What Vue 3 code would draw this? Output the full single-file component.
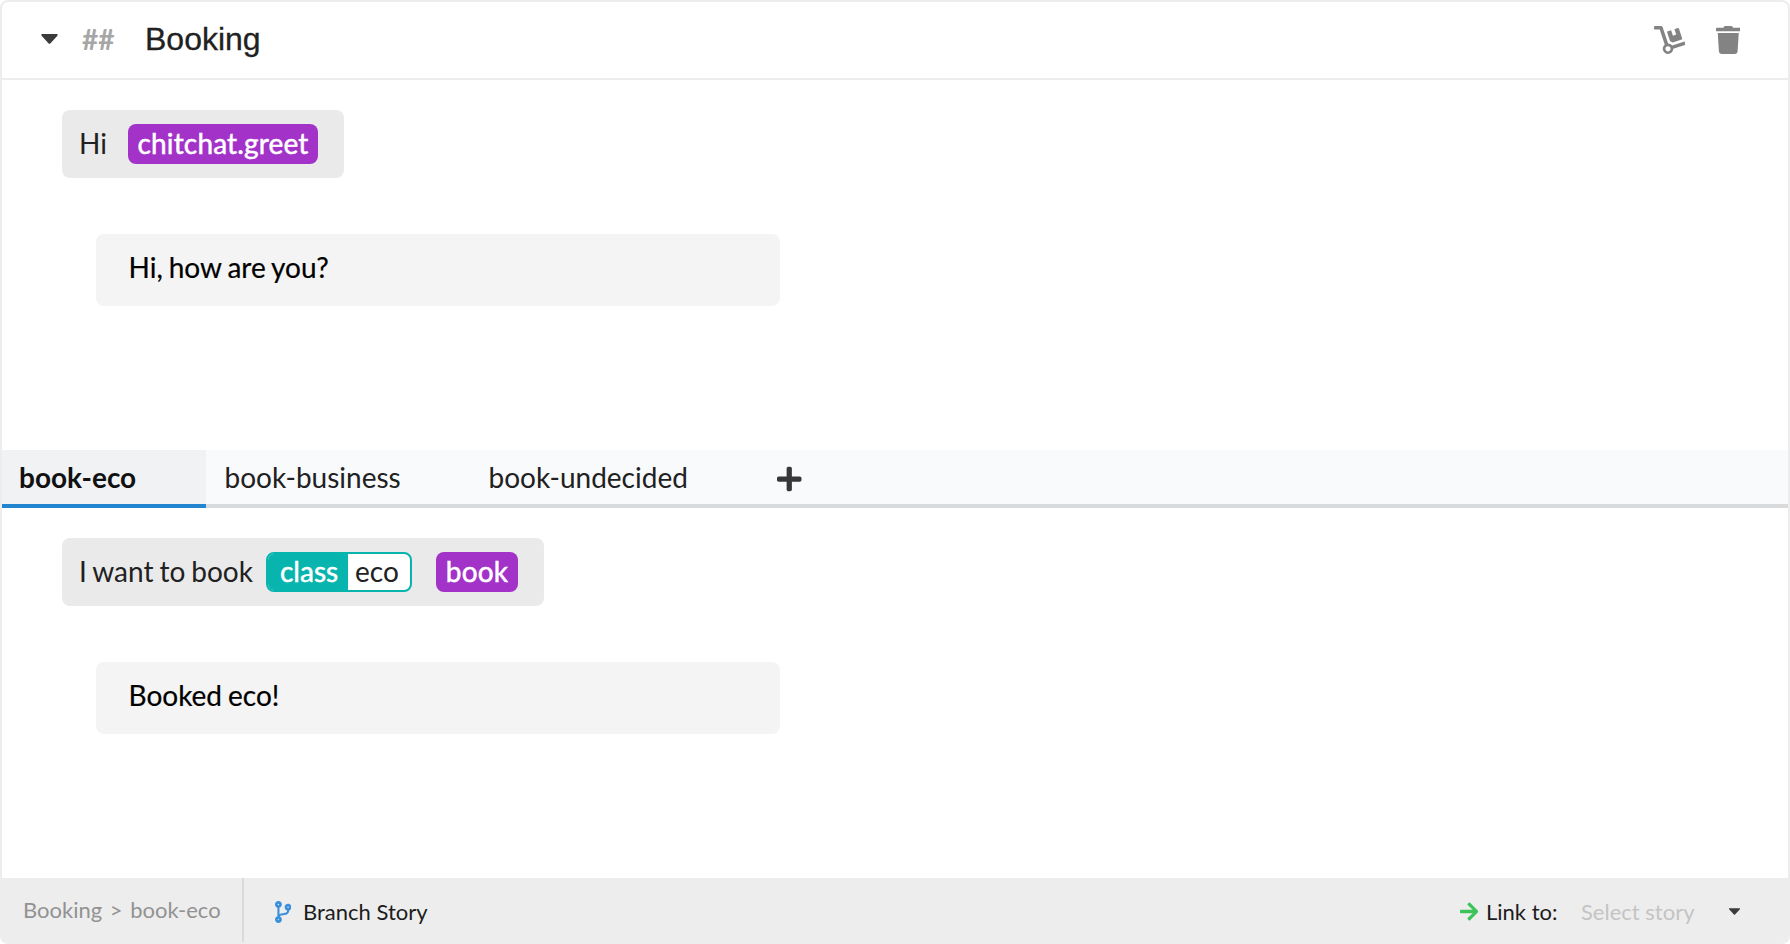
<script setup>
const branches = [
  { name: 'book-eco', size: 'eco', active: true },
  { name: 'book-business', size: 'business', active: false },
  { name: 'book-undecided', size: 'undecided', active: false },
]
</script>

<template>
  <div class="story">
    <header class="header">
      <svg class="caret" viewBox="0 0 284 174"><path d="M13.3 0h257.3c17.8 0 17.7 21.5 5 34.1L156.1 165c-7.8 7.8-20.5 7.8-28.3 0L8.2 34.1C-4.4 21.5-4.5 0 13.3 0z" /></svg>
      <span class="hash">##</span>
      <h1 class="title">Booking</h1>
      <div class="tools">
        <svg class="dolly" viewBox="0 0 576 512"><path d="M294.2 277.7c18 5 34.7 13.4 49.5 24.7l161.5-53.8c8.4-2.8 12.9-11.9 10.1-20.2L454.9 47.2c-2.8-8.4-11.9-12.9-20.2-10.1l-61.1 20.4 33.1 99.4L346 177l-33.1-99.4-61.6 20.5c-8.4 2.8-12.9 11.9-10.1 20.2l53 159.4zm281 48.7L565 296c-2.8-8.4-11.9-12.9-20.2-10.1l-213.5 71.2c-17.2-22-43.6-36.4-73.5-37L158.4 21.9C154 8.8 141.8 0 128 0H16C7.2 0 0 7.2 0 16v32c0 8.8 7.2 16 16 16h88.9l92.2 276.7c-26.1 20.4-41.7 53.6-36 90.5 6.1 39.4 37.9 72.3 77.3 79.2 60.2 10.7 112.3-34.8 113.4-92.6l213.3-71.2c8.3-2.8 12.9-11.8 10.1-20.2zM256 464c-26.5 0-48-21.5-48-48s21.5-48 48-48 48 21.5 48 48-21.5 48-48 48z" /></svg>
        <svg class="trash" viewBox="0 0 448 512"><path d="M432 32H312l-9.4-18.7A24 24 0 0 0 281.1 0H166.8a23.72 23.72 0 0 0-21.4 13.3L136 32H16A16 16 0 0 0 0 48v32a16 16 0 0 0 16 16h416a16 16 0 0 0 16-16V48a16 16 0 0 0-16-16zM53.2 467a48 48 0 0 0 47.9 45h245.8a48 48 0 0 0 47.9-45L416 128H32z" /></svg>
      </div>
    </header>

    <section class="dialogue opening">
      <div class="user greet">
        <span class="words">Hi</span>
        <span class="intent">chitchat.greet</span>
      </div>
      <div class="bot">Hi, how are you?</div>
    </section>

    <nav class="tabs">
      <div v-for="b in branches" :key="b.name" class="tab" :class="[b.size, { active: b.active }]">{{ b.name }}</div>
      <div class="add">
        <svg viewBox="0 0 448 512"><path d="M416 208H272V64c0-17.67-14.33-32-32-32h-32c-17.67 0-32 14.33-32 32v144H32c-17.67 0-32 14.33-32 32v32c0 17.67 14.33 32 32 32h144v144c0 17.67 14.33 32 32 32h32c17.67 0 32-14.33 32-32V304h144c17.67 0 32-14.33 32-32v-32c0-17.67-14.33-32-32-32z" /></svg>
      </div>
    </nav>

    <section class="dialogue">
      <div class="user request">
        <span class="words">I want to book</span>
        <span class="entity"><b>class</b><span class="value">eco</span></span>
        <span class="intent">book</span>
      </div>
      <div class="bot">Booked eco!</div>
    </section>

    <footer class="footer">
      <div class="crumbs"><span>Booking</span><span class="sep">&gt;</span><span>book-eco</span></div>
      <div class="branch">
        <svg viewBox="0 0 384 512"><path d="M384 144c0-44.2-35.8-80-80-80s-80 35.8-80 80c0 36.4 24.3 67.1 57.5 76.8-.6 16.1-4.2 28.5-11 36.9-15.4 19.2-49.3 22.4-85.2 25.7-28.2 2.6-57.4 5.4-81.3 16.9v-144c32.5-10.2 56-40.5 56-76.3 0-44.2-35.8-80-80-80S0 35.8 0 80c0 35.8 23.5 66.1 56 76.3v199.3C23.5 365.9 0 396.2 0 432c0 44.2 35.8 80 80 80s80-35.8 80-80c0-34-21.2-63.1-51.2-74.6 3.1-5.2 7.8-9.8 14.9-13.4 16.2-8.2 40.4-10.4 66.1-12.8 42.2-3.9 90-8.4 118.2-43.4 14-17.4 21.1-39.8 21.6-67.9 31.6-10.8 54.4-40.7 54.4-75.9zM80 64c8.8 0 16 7.2 16 16s-7.2 16-16 16-16-7.2-16-16 7.2-16 16-16zm0 384c-8.8 0-16-7.2-16-16s7.2-16 16-16 16 7.2 16 16-7.2 16-16 16zm224-320c8.8 0 16 7.2 16 16s-7.2 16-16 16-16-7.2-16-16 7.2-16 16-16z" /></svg>
        <span>Branch Story</span>
      </div>
      <div class="link">
        <svg class="arrow" viewBox="0 0 448 512"><path d="M190.5 66.9l22.2-22.2c9.4-9.4 24.6-9.4 33.9 0L441 239c9.4 9.4 9.4 24.6 0 33.9L246.6 467.3c-9.4 9.4-24.6 9.4-33.9 0l-22.2-22.2c-9.5-9.5-9.3-25 .4-34.3L311.4 296H24c-13.3 0-24-10.7-24-24v-32c0-13.3 10.7-24 24-24h287.4L190.9 101.2c-9.8-9.3-10-24.8-.4-34.3z" /></svg>
        <span class="linkto">Link to:</span>
        <span class="select">Select story</span>
        <svg class="caret small" viewBox="0 0 284 174"><path d="M13.3 0h257.3c17.8 0 17.7 21.5 5 34.1L156.1 165c-7.8 7.8-20.5 7.8-28.3 0L8.2 34.1C-4.4 21.5-4.5 0 13.3 0z" /></svg>
      </div>
    </footer>
  </div>
</template>

<style>
body {
  background: #fff;
}
</style>

<style scoped>
.story {
  box-sizing: border-box;
  width: 1790px;
  height: 944px;
  display: flex;
  flex-direction: column;
  border: 2px solid #ededed;
  border-radius: 8px;
  overflow: hidden;
  background: #fff;
  color: #212121;
  font-family: Lato, "Open Sans", sans-serif;
  font-size: 28px;
  line-height: 40px;
  white-space: nowrap;
}
svg {
  display: block;
  flex: none;
}
.header {
  box-sizing: border-box;
  height: 78px;
  flex: none;
  display: flex;
  align-items: center;
  padding: 0 48px 2px 39px;
  border-bottom: 2px solid #ededed;
}
.caret {
  width: 17px;
  height: 10px;
  fill: #3b3b3b;
}
.hash {
  width: 63px;
  margin-left: 24px;
  color: #a6a6a6;
  font-weight: 700;
}
.title {
  margin: 0;
  color: #212121;
  font: 400 32px/40px "Liberation Sans", Arial, sans-serif;
  -webkit-text-stroke: 0.3px;
}
.tools {
  display: flex;
  gap: 30.5px;
  margin-left: auto;
  padding-top: 1px;
}
.tools svg {
  height: 28px;
  fill: #838383;
}
.dolly {
  width: 31.5px;
}
.trash {
  width: 24.5px;
}
.dialogue {
  flex: none;
  height: 370px;
  box-sizing: border-box;
  padding: 30px 0 0 60px;
}
.user {
  box-sizing: border-box;
  height: 68px;
  display: flex;
  align-items: center;
  padding: 0 17px;
  border-radius: 8px;
  background: #eaeaea;
  line-height: 38px;
  word-spacing: -1.2px;
}
.words {
  padding-bottom: 2px;
}
.greet {
  width: 282px;
}
.greet .words {
  width: 49px;
}
.request {
  width: 482px;
}
.request .words {
  width: 187px;
}
.intent {
  box-sizing: border-box;
  height: 40px;
  border-radius: 8px;
  background: #a333c8;
  color: #fff;
  text-align: center;
  letter-spacing: 0.15px;
  -webkit-text-stroke: 0.5px;
}
.greet .intent {
  width: 190px;
}
.request .intent {
  width: 82px;
  margin-left: 24px;
}
.entity {
  box-sizing: border-box;
  width: 146px;
  height: 40px;
  display: flex;
  border: 2px solid #07b5ae;
  border-radius: 8px;
  overflow: hidden;
  background: #fff;
  line-height: 34px;
}
.entity b {
  width: 80px;
  height: 36px;
  box-sizing: border-box;
  padding-left: 12px;
  background: #07b5ae;
  color: #fff;
  font-weight: 400;
  -webkit-text-stroke: 0.5px;
}
.value {
  padding-left: 7px;
}
.bot {
  box-sizing: border-box;
  width: 684px;
  height: 72px;
  margin: 56px 0 0 34px;
  padding: 13px 32.5px;
  border-radius: 8px;
  background: #f4f4f4;
  color: #000;
  word-spacing: -1.2px;
  -webkit-text-stroke: 0.2px;
}
.tabs {
  flex: none;
  height: 58px;
  display: flex;
  background: #f9fafc;
}
.tab,
.add {
  box-sizing: border-box;
  height: 58px;
  padding: 7px 0 0 18.5px;
  border-bottom: 4px solid #d9dadc;
}
.tab.active {
  padding-left: 17px;
  background: #f1f2f4;
  border-color: #2185d0;
  color: #111;
  font-weight: 700;
}
.eco {
  width: 204px;
}
.business {
  width: 264px;
}
.undecided {
  width: 288.5px;
}
.add {
  flex: 1;
  padding-top: 15px;
}
.add svg {
  width: 24.5px;
  height: 28px;
  fill: #373737;
}
.footer {
  flex: 1;
  display: flex;
  background: #ededed;
  font-size: 22px;
}
.crumbs {
  box-sizing: border-box;
  width: 242px;
  height: 64px;
  display: flex;
  gap: 7.6px;
  padding: 12px 0 0 21px;
  border-right: 2px solid #dadada;
  color: #929292;
}
.branch {
  display: flex;
  align-items: center;
  padding: 3px 0 0 30.5px;
  color: #1c1c1c;
}
.branch svg {
  width: 16.5px;
  height: 22px;
  margin-right: 12px;
  fill: #3a8fdd;
}
.link {
  display: flex;
  align-items: center;
  margin-left: auto;
  padding: 3px 48px 0 0;
  color: #1c1c1c;
}
.arrow {
  width: 18.4px;
  height: 21px;
  fill: #3cc35a;
}
.linkto {
  width: 95px;
  margin-left: 8px;
}
.select {
  width: 148px;
  color: #c4c4c4;
}
.small {
  width: 11px;
  height: 7px;
}
</style>
